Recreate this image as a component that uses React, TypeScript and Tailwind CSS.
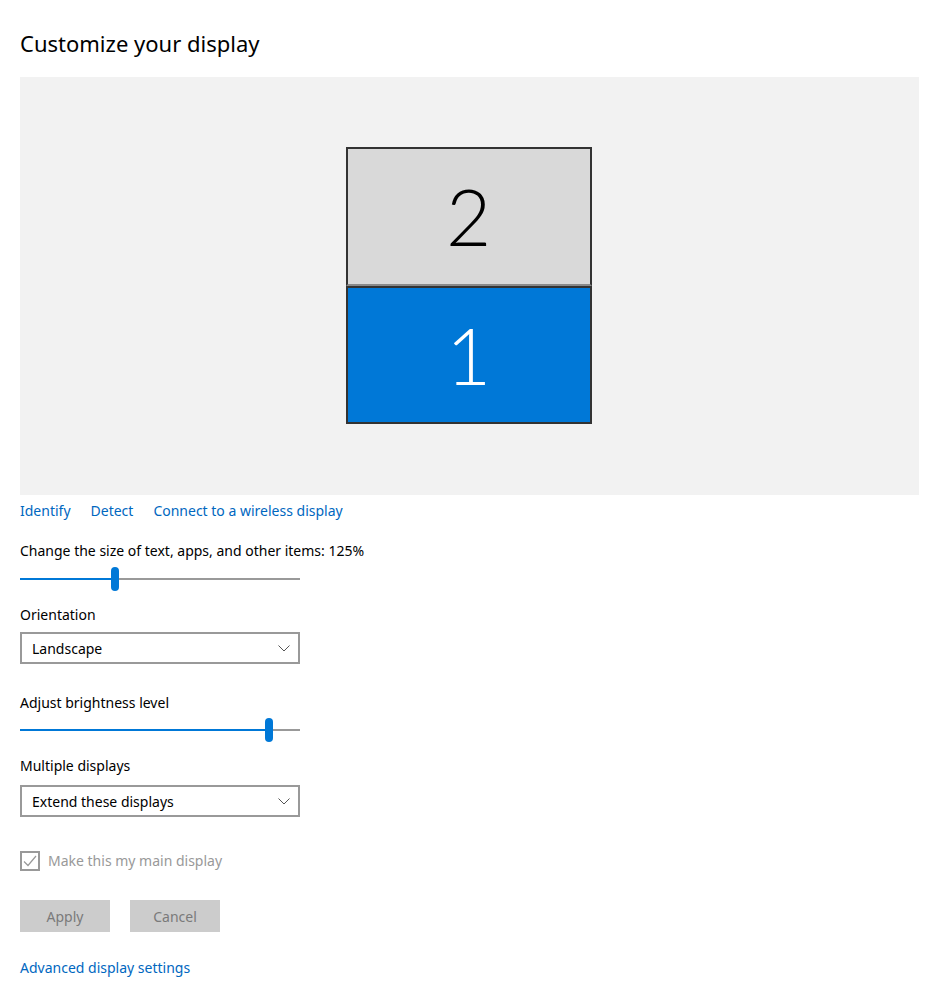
import { FC } from "react"

const Slider: FC<{ value: number }> = ({ value }) => (
  <div className="relative h-[24px] w-[280px]">
    <div className="absolute left-0 top-[11px] h-[2px] w-full bg-[#999999]" />
    <div className="absolute left-0 top-[11px] h-[2px] bg-[#0078d7]" style={{ width: value }} />
    <div className="absolute top-0 h-[24px] w-[8px] rounded-full bg-[#0078d7]" style={{ left: value - 4 }} />
  </div>
)

const Chevron = () => (
  <svg width="12" height="7" viewBox="0 0 12 7" fill="none" stroke="#555" strokeWidth="1">
    <path d="M0.5 0.5 L6 6 L11.5 0.5" />
  </svg>
)

const Dropdown: FC<{ label: string }> = ({ label }) => (
  <div className="flex h-[32px] w-[280px] items-center justify-between border-2 border-[#999999] pl-[10px] pr-[8px] text-black">
    <span>{label}</span>
    <Chevron />
  </div>
)

export default function App() {
  return (
    <div
      className="min-h-[1003px] w-[936px] bg-white px-5 pt-[27px] text-[14px] text-black"
      style={{ fontFamily: '"Segoe UI", "Noto Sans", "Open Sans", sans-serif' }}
    >
      <h1 className="h-[32px] text-[22px] leading-[32px] font-normal">Customize your display</h1>

      <div className="mt-[18px] flex h-[418px] w-[899px] items-center justify-center bg-[#f2f2f2] pr-[2px] pb-[2px]">
        <div className="flex w-[246px] flex-col">
          <div className="flex h-[139px] items-center justify-center border-2 border-[#333333] border-b-[#8a8a8a] bg-[#d9d9d9]">
            <span className="text-[78px] leading-none font-light text-black" style={{ fontFamily: '"Segoe UI Light", Lato, "Open Sans", sans-serif' }}>2</span>
          </div>
          <div className="flex h-[138px] items-center justify-center border-2 border-[#333333] bg-[#0078d7]">
            <span className="text-[78px] leading-none font-light text-white" style={{ fontFamily: '"Segoe UI Light", Lato, "Open Sans", sans-serif' }}>1</span>
          </div>
        </div>
      </div>

      <div className="mt-[6px] flex h-[20px] items-center gap-5 leading-[20px] text-[#0067c0]">
        <span>Identify</span>
        <span>Detect</span>
        <span>Connect to a wireless display</span>
      </div>

      <div className="mt-[20px] h-[20px] leading-[20px]">Change the size of text, apps, and other items: 125%</div>
      <div className="mt-[6px]">
        <Slider value={95} />
      </div>

      <div className="mt-[14px] h-[20px] leading-[20px]">Orientation</div>
      <div className="mt-[7px]">
        <Dropdown label="Landscape" />
      </div>

      <div className="mt-[29px] h-[20px] leading-[20px]">Adjust brightness level</div>
      <div className="mt-[5px]">
        <Slider value={249} />
      </div>

      <div className="mt-[14px] h-[20px] leading-[20px]">Multiple displays</div>
      <div className="mt-[9px]">
        <Dropdown label="Extend these displays" />
      </div>

      <div className="mt-[34px] flex h-[20px] items-center gap-[8px] text-[#999999]">
        <div className="flex h-[20px] w-[20px] items-center justify-center border-2 border-[#999999]">
          <svg width="14" height="12" viewBox="0 0 14 12" fill="none" stroke="#999999" strokeWidth="1.2">
            <path d="M1 6.5 L5 10.5 L13 1" />
          </svg>
        </div>
        <span className="leading-[20px]">Make this my main display</span>
      </div>

      <div className="mt-[29px] flex gap-5">
        <button className="h-[32px] w-[90px] bg-[#cccccc] text-[#7a7a7a]">Apply</button>
        <button className="h-[32px] w-[90px] bg-[#cccccc] text-[#7a7a7a]">Cancel</button>
      </div>

      <div className="mt-[26px] h-[20px] leading-[20px] text-[#0067c0]">Advanced display settings</div>
    </div>
  )
}
